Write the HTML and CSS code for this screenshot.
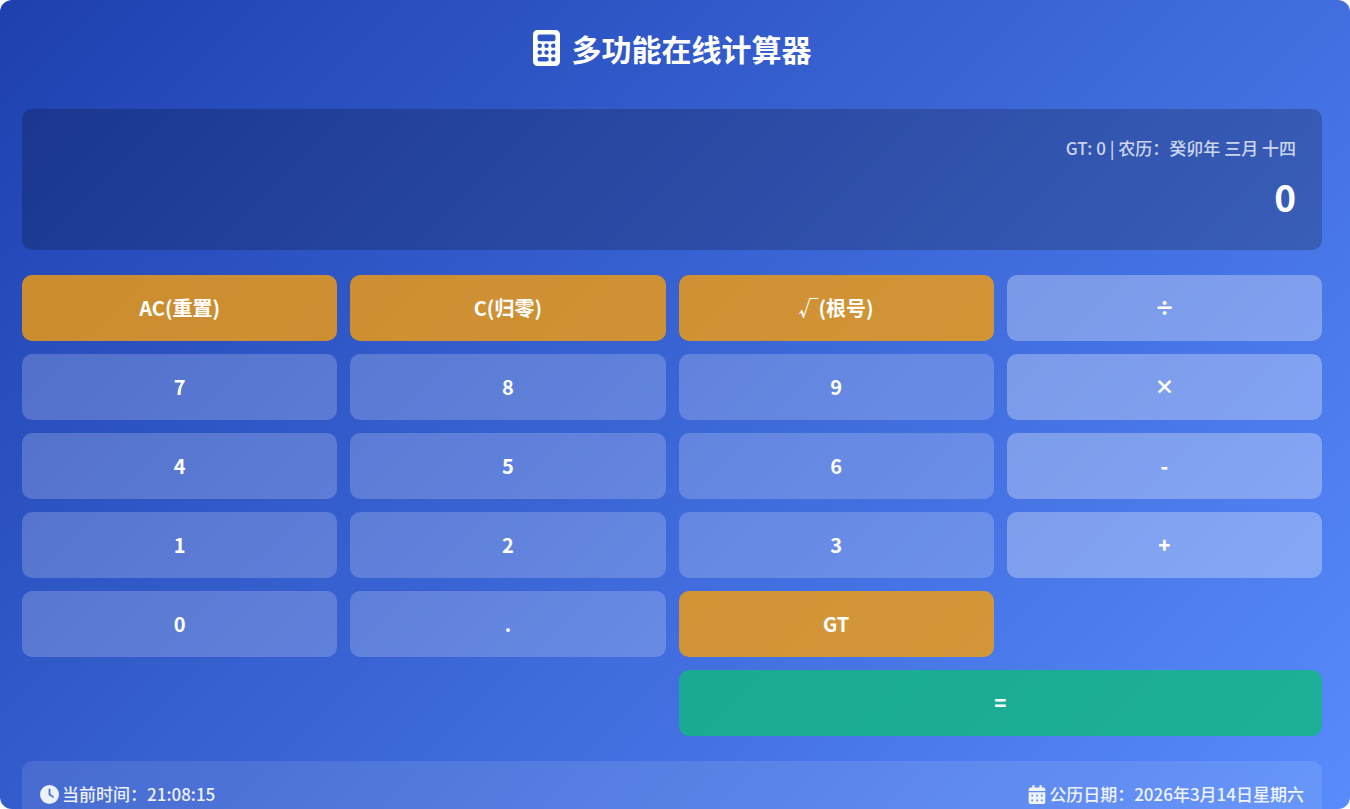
FILE: index.html
```html
<!DOCTYPE html>
<html lang="zh-CN">
<head>
  <meta charset="UTF-8">
  <meta name="viewport" content="width=device-width, initial-scale=1.0">
  <title>多功能在线计算器</title>
  <link rel="stylesheet" href="styles.css">
</head>
<body>

<div class="calculator">
  <h1 class="title">
    <svg class="title-icon" viewBox="0 0 384 512" aria-hidden="true">
      <path fill="currentColor" fill-rule="evenodd" d="M64 0H320a64 64 0 0 1 64 64V448a64 64 0 0 1-64 64H64a64 64 0 0 1-64-64V64A64 64 0 0 1 64 0ZM96 64a32 32 0 0 0-32 32v32a32 32 0 0 0 32 32H288a32 32 0 0 0 32-32V96a32 32 0 0 0-32-32ZM64 224a32 32 0 1 0 64 0a32 32 0 1 0-64 0ZM160 224a32 32 0 1 0 64 0a32 32 0 1 0-64 0ZM256 224a32 32 0 1 0 64 0a32 32 0 1 0-64 0ZM64 320a32 32 0 1 0 64 0a32 32 0 1 0-64 0ZM160 320a32 32 0 1 0 64 0a32 32 0 1 0-64 0ZM256 320a32 32 0 1 0 64 0a32 32 0 1 0-64 0ZM96 384a32 32 0 0 0 0 64H192a32 32 0 0 0 0-64ZM256 416a32 32 0 1 0 64 0a32 32 0 1 0-64 0Z"/>
    </svg>
    多功能在线计算器
  </h1>

  <div class="display">
    <div class="history">GT: 0 | 农历：癸卯年 三月 十四</div>
    <div class="result">0</div>
  </div>

  <div class="keys">
    <button class="key func">AC(重置)</button>
    <button class="key func">C(归零)</button>
    <button class="key func">√(根号)</button>
    <button class="key operator">÷</button>

    <button class="key">7</button>
    <button class="key">8</button>
    <button class="key">9</button>
    <button class="key operator">×</button>

    <button class="key">4</button>
    <button class="key">5</button>
    <button class="key">6</button>
    <button class="key operator">-</button>

    <button class="key">1</button>
    <button class="key">2</button>
    <button class="key">3</button>
    <button class="key operator">+</button>

    <button class="key">0</button>
    <button class="key">.</button>
    <button class="key func">GT</button>
    <button class="key equals">=</button>
  </div>

  <div class="info">
    <div class="info-item">
      <svg class="clock-icon" viewBox="0 0 512 512" aria-hidden="true">
        <path fill="currentColor" fill-rule="evenodd" d="M256 0a256 256 0 1 1 0 512A256 256 0 1 1 256 0zM232 120V256c0 8 4 15.500 10.700 20l96 64c11 7.400 25.900 4.400 33.300-6.700s4.400-25.900-6.700-33.300L280 243.200V120c0-13.300-10.700-24-24-24s-24 10.700-24 24z"/>
      </svg>
      <span>当前时间：21:08:15</span>
    </div>
    <div class="info-item">
      <svg class="date-icon" viewBox="0 0 448 512" aria-hidden="true">
        <path fill="currentColor" fill-rule="evenodd" d="M128 0c17.700 0 32 14.300 32 32V64H288V32a32 32 0 0 1 64 0V64h48a48 48 0 0 1 48 48v48H0V112A48 48 0 0 1 48 64H96V32A32 32 0 0 1 128 0ZM0 192H448V464a48 48 0 0 1-48 48H48a48 48 0 0 1-48-48ZM72 264v48h48V264ZM200 264v48h48V264ZM328 264v48h48V264ZM72 392v48h48V392ZM200 392v48h48V392ZM328 392v48h48V392Z"/>
      </svg>
      <span>公历日期：2026年3月14日星期六</span>
    </div>
  </div>
</div>

</body>
</html>
```
FILE: styles.css
```css
* { margin: 0; padding: 0; box-sizing: border-box; }
body { font-family: "Noto Sans CJK SC", sans-serif; background: white; color: white; }
.calculator { height: 100vh; overflow: hidden; padding: 22px 28px 22px 22px; border-radius: 12px; background: linear-gradient(135deg, #1e40af, #588bfc); }

.title { display: flex; justify-content: center; align-items: center; gap: 12px; height: 52px; margin-bottom: 35px; font-size: 30px; line-height: 50px; font-weight: bold; }
.title-icon { height: 36px; width: 27px; }

.display { padding: 26px; margin-bottom: 25px; border-radius: 10px; background: rgba(0,0,0,0.2); text-align: right; }
.history { font-size: 17px; line-height: 26px; font-weight: 500; margin-bottom: 8px; opacity: 0.75; }
.result { font-size: 37px; line-height: 55px; font-weight: bold; }

.keys { display: grid; grid-template-columns: repeat(4, 1fr); gap: 13px; margin-bottom: 25px; }
.key { height: 66px; padding-bottom: 2px; border: none; border-radius: 10px; background: rgba(255,255,255,0.2); color: white; font-family: inherit; font-size: 20px; font-weight: bold; cursor: pointer; }
.key:hover { filter: brightness(1.1); }
.operator { background: rgba(255,255,255,0.3); font-weight: 900; }
.func { background: rgba(245,158,11,0.8); }
.equals { grid-column: 3 / 5; background: rgba(16,185,129,0.8); font-weight: 900; }

.info { display: flex; justify-content: space-between; padding: 18px; border-radius: 10px; background: rgba(255,255,255,0.1); font-size: 17px; line-height: 30px; font-weight: 500; }
.info-item { display: flex; align-items: center; gap: 3px; opacity: 0.9; }
.clock-icon { width: 19px; height: 19px; }
.date-icon { width: 18px; height: 19px; }
```
